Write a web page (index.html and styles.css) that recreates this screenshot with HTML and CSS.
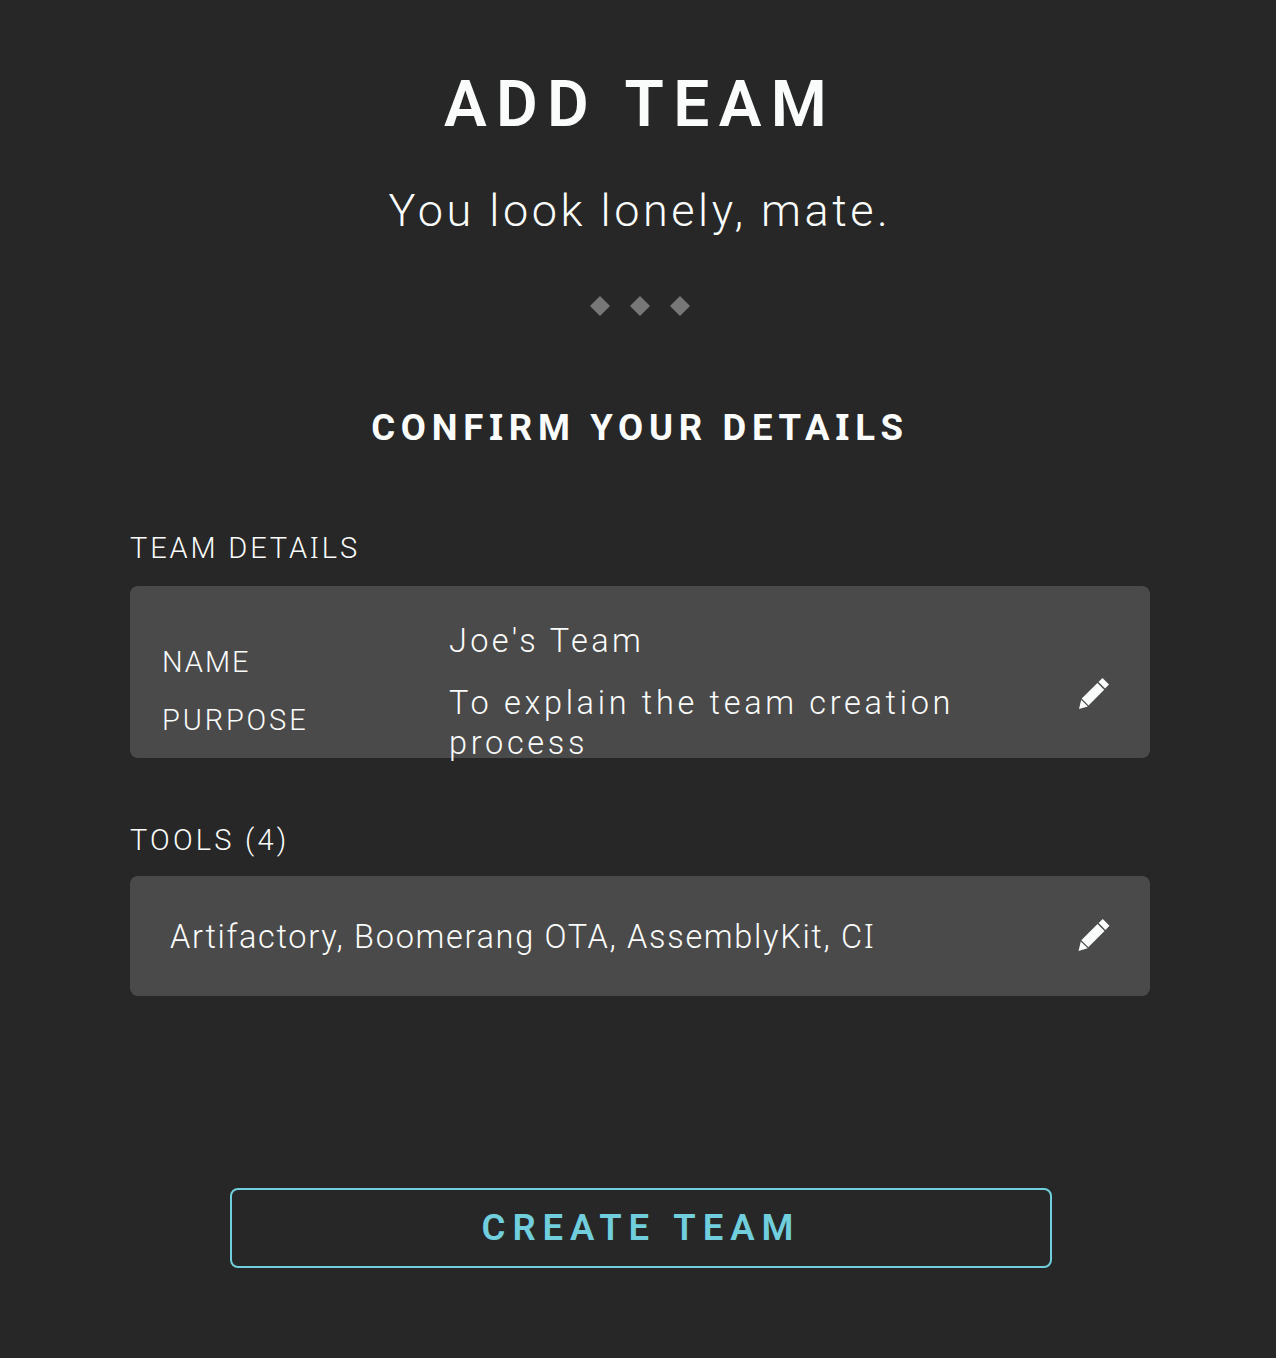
FILE: index.html
```html
<!DOCTYPE html>
<html lang="en">
<head>
<meta charset="utf-8">
<title>Add Team</title>
<link rel="stylesheet" href="styles.css">
</head>
<body>
<svg class="defs" aria-hidden="true">
  <symbol id="pencil" viewBox="0 0 30 31">
    <path d="M0 31 2.2 21.8 8.9 28.4ZM2.7 20.6 18.4 4.9 25.2 11.7 9.5 27.4ZM19.5 3.9 23.5 0 30 6.6 26.1 10.6Z"/>
  </symbol>
</svg>
<main class="page">
  <header class="intro">
    <h1 class="title">ADD TEAM</h1>
    <p class="subtitle">You look lonely, mate.</p>
    <div class="steps"><i class="step"></i><i class="step"></i><i class="step"></i></div>
    <h2 class="heading">CONF<span class="slab">I</span>RM YOUR DETA<span class="slab">I</span>LS</h2>
  </header>

  <section class="section">
    <h3 class="label">TEAM DETA<span class="slab">I</span>LS</h3>
    <div class="card details">
      <div class="keys">
        <div class="label key-name">NAME</div>
        <div class="label">PURPOSE</div>
      </div>
      <div class="values">
        <div class="value-name">Joe's Team</div>
        <div>To explain the team creation process</div>
      </div>
      <button class="edit edit-details" aria-label="Edit team details"><svg><use href="#pencil"/></svg></button>
    </div>
  </section>

  <section class="section tools-section">
    <h3 class="label label-tools">TOOLS (4)</h3>
    <div class="card tools">
      <div class="tool-list">Artifactory, Boomerang OTA, AssemblyKit, C<span class="slab">I</span></div>
      <button class="edit edit-tools" aria-label="Edit tools"><svg><use href="#pencil"/></svg></button>
    </div>
  </section>

  <button class="create">CREATE TEAM</button>
</main>
</body>
</html>
```
FILE: styles.css
```css
* { box-sizing: border-box; margin: 0; padding: 0; }

body {
  min-height: 1358px;
  background: #272727;
  color: #fafcfb;
  font-family: Roboto, "Liberation Sans", sans-serif;
  font-weight: 300;
}

.defs { display: none; }
.slab { font-family: "Noto Sans", sans-serif; line-height: 1; }

.page {
  display: flex;
  flex-direction: column;
  width: 1020px;
  margin-left: 130px;
  padding-top: 65px;
}

.intro { display: flex; flex-direction: column; align-items: center; }

.title { font-size: 64px; line-height: 80px; font-weight: 600; letter-spacing: 9.3px; word-spacing: 3px; }
.subtitle { margin-top: 36px; font-size: 45px; line-height: 60px; letter-spacing: 3.55px; }

.steps { display: flex; gap: 20px; margin-top: 55px; }
.step { width: 20px; height: 20px; background: #777; clip-path: polygon(50% 0, 100% 50%, 50% 100%, 0 50%); }

.heading { margin-top: 88px; font-size: 36.5px; line-height: 48px; font-weight: 680; letter-spacing: 5.7px; }

.section { display: flex; flex-direction: column; gap: 18px; margin-top: 76px; }
.tools-section { gap: 16px; margin-top: 62px; }

.label { font-size: 29px; line-height: 40px; font-weight: 350; letter-spacing: 2.85px; }
.label-tools { letter-spacing: 3.2px; }
.key-name { letter-spacing: 2px; }

.card { display: flex; border-radius: 8px; background: #4a4a4a; }

.details { height: 172px; padding-left: 32px; }
.keys { display: flex; flex-direction: column; gap: 18px; width: 287px; padding-top: 56px; }
.values {
  display: flex;
  flex-direction: column;
  gap: 22px;
  width: 540px;
  padding-top: 35px;
  font-size: 32.5px;
  font-weight: 350;
  line-height: 40px;
  letter-spacing: 3.67px;
}
.value-name { letter-spacing: 3.35px; }

.tools { height: 120px; padding-left: 40px; }
.tool-list { padding-top: 41px; font-size: 32.5px; font-weight: 350; line-height: 40px; letter-spacing: 1.68px; }

.edit { margin-left: auto; border: 0; background: none; }
.edit svg { display: block; width: 100%; height: 100%; fill: #fafcfb; }
.edit-details { width: 30px; height: 31px; margin-top: 92px; margin-right: 41px; }
.edit-tools { width: 32px; height: 32px; margin-top: 43px; margin-right: 40px; }

.create {
  width: 822px;
  height: 80px;
  margin: 192px 0 0 100px;
  border: 2px solid #70cedd;
  border-radius: 8px;
  background: none;
  color: #70cedd;
  font: 600 36.5px/76px Roboto, "Liberation Sans", sans-serif;
  letter-spacing: 6.95px;
  word-spacing: 2px;
}
```
